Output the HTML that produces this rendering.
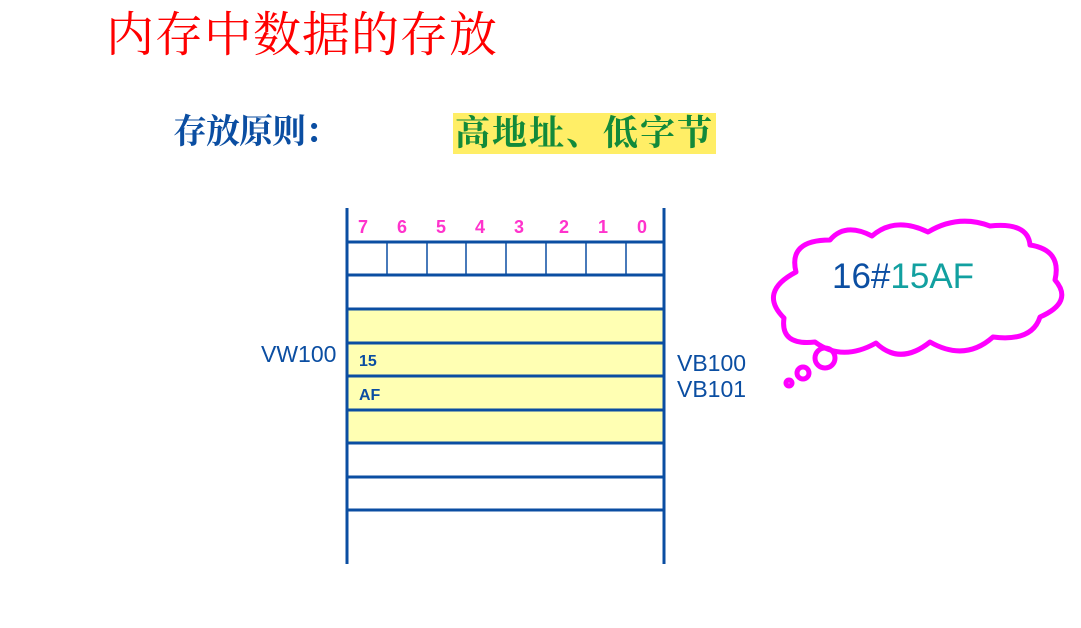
<!DOCTYPE html>
<html><head><meta charset="utf-8"><style>
html,body{margin:0;padding:0;background:#fff;width:1081px;height:628px;overflow:hidden;position:relative}
.t{position:absolute;white-space:nowrap}
</style></head><body>
<div class="t" style="left:106px;top:8px;font-family:'Liberation Serif','Noto Serif CJK SC',serif;font-size:48px;line-height:56px;color:#ff0000;letter-spacing:1px">内存中数据的存放</div>
<div class="t" style="left:173px;top:112px;font-family:'Liberation Serif','Noto Serif CJK SC',serif;font-weight:bold;font-size:34px;line-height:42px;color:#0b4ea2;letter-spacing:-1px">存放原则：</div>
<div class="t" style="left:453px;top:113px;width:263px;height:41px;background:#ffee66"></div>
<div class="t" style="left:455px;top:113px;font-family:'Liberation Serif','Noto Serif CJK SC',serif;font-weight:bold;font-size:35px;line-height:42px;color:#128a3a;letter-spacing:2px">高地址、低字节</div>

<svg width="1081" height="628" style="position:absolute;left:0;top:0">
<rect x="347" y="309" width="317" height="134" fill="#ffffb3"/>
<g stroke="#0b4ea2" stroke-width="3">
<line x1="347" y1="208" x2="347" y2="564"/>
<line x1="664" y1="208" x2="664" y2="564"/>
<line x1="347" y1="242" x2="664" y2="242"/>
<line x1="347" y1="275" x2="664" y2="275"/>
<line x1="347" y1="309" x2="664" y2="309"/>
<line x1="347" y1="343" x2="664" y2="343"/>
<line x1="347" y1="376" x2="664" y2="376"/>
<line x1="347" y1="410" x2="664" y2="410"/>
<line x1="347" y1="443" x2="664" y2="443"/>
<line x1="347" y1="477" x2="664" y2="477"/>
<line x1="347" y1="510" x2="664" y2="510"/>
</g>
<g stroke="#0b4ea2" stroke-width="1.5">
<line x1="387" y1="242" x2="387" y2="275"/>
<line x1="427" y1="242" x2="427" y2="275"/>
<line x1="466" y1="242" x2="466" y2="275"/>
<line x1="506" y1="242" x2="506" y2="275"/>
<line x1="546" y1="242" x2="546" y2="275"/>
<line x1="586" y1="242" x2="586" y2="275"/>
<line x1="626" y1="242" x2="626" y2="275"/>
</g>
<g font-family="Liberation Sans, sans-serif" font-weight="bold" font-size="18" fill="#ff33cc">
<text x="358" y="233">7</text><text x="397" y="233">6</text><text x="436" y="233">5</text><text x="475" y="233">4</text><text x="514" y="233">3</text><text x="559" y="233">2</text><text x="598" y="233">1</text><text x="637" y="233">0</text>
</g>
<g font-family="Liberation Sans, sans-serif" font-weight="bold" font-size="16" fill="#0b4ea2">
<text x="359" y="366">15</text><text x="359" y="400">AF</text>
</g>
<g font-family="Liberation Sans, sans-serif" font-size="23" fill="#0b4ea2">
<text x="261" y="362">VW100</text>
<text x="677" y="371">VB100</text>
<text x="677" y="397">VB101</text>
</g>
<!-- cloud -->
<path d="M784 318 Q758 292 796 272 Q788 240 830 240 Q845 222 872 236 Q895 216 928 232 Q958 214 990 226 Q1028 222 1030 245 Q1062 250 1055 280 Q1074 302 1040 317 Q1032 342 993 337 Q965 362 930 342 Q900 366 876 343 Q842 362 815 342 Q780 346 784 318 Z" fill="#fff" stroke="#ff00ff" stroke-width="5" stroke-linejoin="round"/>
<g fill="none" stroke="#ff00ff" stroke-width="5">
<circle cx="825" cy="358" r="10"/>
<circle cx="803" cy="373" r="6"/>
<circle cx="789" cy="383" r="3"/>
</g>
<text x="832" y="288" font-family="Liberation Sans, sans-serif" font-size="35" fill="#0b4ea2">16#<tspan fill="#12a0a0">15AF</tspan></text>
</svg>
</body></html>
